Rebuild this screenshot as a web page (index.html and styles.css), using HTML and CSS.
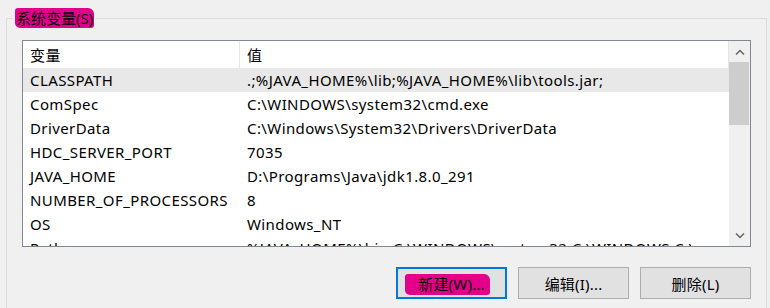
FILE: index.html
```html
<!DOCTYPE html>
<html lang="zh-CN">
<head>
    <meta charset="UTF-8">
    <title>系统变量</title>
    <link rel="stylesheet" href="styles.css">
</head>
<body>
    <div class="group">
        <div class="group-title"><span class="mark">系统变量(S)</span></div>

        <div class="listbox">
            <div class="list">
                <div class="row head">
                    <div class="cell name">变量</div>
                    <div class="cell value">值</div>
                </div>
                <div class="row selected">
                    <div class="cell name">CLASSPATH</div>
                    <div class="cell value">.;%JAVA_HOME%\lib;%JAVA_HOME%\lib\tools.jar;</div>
                </div>
                <div class="row">
                    <div class="cell name">ComSpec</div>
                    <div class="cell value">C:\WINDOWS\system32\cmd.exe</div>
                </div>
                <div class="row">
                    <div class="cell name">DriverData</div>
                    <div class="cell value">C:\Windows\System32\Drivers\DriverData</div>
                </div>
                <div class="row">
                    <div class="cell name">HDC_SERVER_PORT</div>
                    <div class="cell value">7035</div>
                </div>
                <div class="row">
                    <div class="cell name">JAVA_HOME</div>
                    <div class="cell value">D:\Programs\Java\jdk1.8.0_291</div>
                </div>
                <div class="row">
                    <div class="cell name">NUMBER_OF_PROCESSORS</div>
                    <div class="cell value">8</div>
                </div>
                <div class="row">
                    <div class="cell name">OS</div>
                    <div class="cell value">Windows_NT</div>
                </div>
                <div class="row">
                    <div class="cell name">Path</div>
                    <div class="cell value">%JAVA_HOME%\bin;C:\WINDOWS\system32;C:\WINDOWS;C:\</div>
                </div>
            </div>
            <div class="scrollbar">
                <div class="arrow">
                    <svg width="10" height="6" viewBox="0 0 10 6"><path d="M1 5.5 L5 1.5 L9 5.5" fill="none" stroke="#606060" stroke-width="1.4"/></svg>
                </div>
                <div class="track">
                    <div class="thumb"></div>
                </div>
                <div class="arrow">
                    <svg width="10" height="6" viewBox="0 0 10 6"><path d="M1 0.5 L5 4.5 L9 0.5" fill="none" stroke="#606060" stroke-width="1.4"/></svg>
                </div>
            </div>
        </div>

        <div class="buttons">
            <button class="btn default"><span class="mark wide">新建(W)...</span></button>
            <button class="btn">编辑(I)...</button>
            <button class="btn">删除(L)</button>
        </div>
    </div>
</body>
</html>
```

FILE: styles.css
```css
body {
    margin: 0;
    padding: 0;
    background-color: #f0f0f0;
    font-family: "Noto Sans", "Noto Sans CJK SC", sans-serif;
    font-size: 15px;
    letter-spacing: 0.4px;
    color: #000;
    overflow: hidden;
}
.group {
    margin: 18px 3px 0 6px;
    height: 300px;
    padding: 0 15px;
    border: 1px solid #dcdcdc;
}
.group-title {
    width: fit-content;
    margin: -11px 0 0 -9px;
    padding: 0 2px;
    height: 20px;
    line-height: 20px;
    background-color: #f0f0f0;
    letter-spacing: 0;
}
.mark {
    background-color: #e2008a;
    border-radius: 3px 6px 3px 5px;
    padding: 0 1px;
}
.mark.wide {
    padding: 0 5px 1px 13px;
    margin-left: -8px;
}
.listbox {
    display: flex;
    margin-top: 12px;
    height: 205px;
    border: 1px solid #828790;
    background-color: #fff;
    overflow: hidden;
}
.list {
    flex: 1;
    overflow: hidden;
}
.row {
    display: flex;
    height: 24px;
    line-height: 24px;
    white-space: nowrap;
}
.row.head {
    height: 27px;
    line-height: 28px;
}
.row.selected {
    background-color: #e8e8e8;
}
.cell {
    padding-left: 7px;
    overflow: hidden;
}
.cell.name {
    width: 210px;
    flex-shrink: 0;
}
.head .cell.name {
    border-right: 1px solid #e5e5e5;
    width: 209px;
}
.head .cell.value {
    flex: 1;
    border-right: 1px solid #e5e5e5;
}
.scrollbar {
    width: 21px;
    display: flex;
    flex-direction: column;
    background-color: #f0f0f0;
}
.arrow {
    height: 21px;
    display: flex;
    align-items: center;
    justify-content: center;
}
.track {
    flex: 1;
}
.thumb {
    height: 63px;
    margin: 0 1px 0 0;
    background-color: #cdcdcd;
}
.buttons {
    display: flex;
    justify-content: flex-end;
    gap: 11px;
    margin-top: 20px;
}
.btn {
    width: 111px;
    height: 32px;
    padding: 0;
    font-family: inherit;
    font-size: 15px;
    letter-spacing: 0.2px;
    color: #000;
    background-color: #e1e1e1;
    border: 1px solid #adadad;
}
.btn.default {
    border: 2px solid #0078d7;
}
```
